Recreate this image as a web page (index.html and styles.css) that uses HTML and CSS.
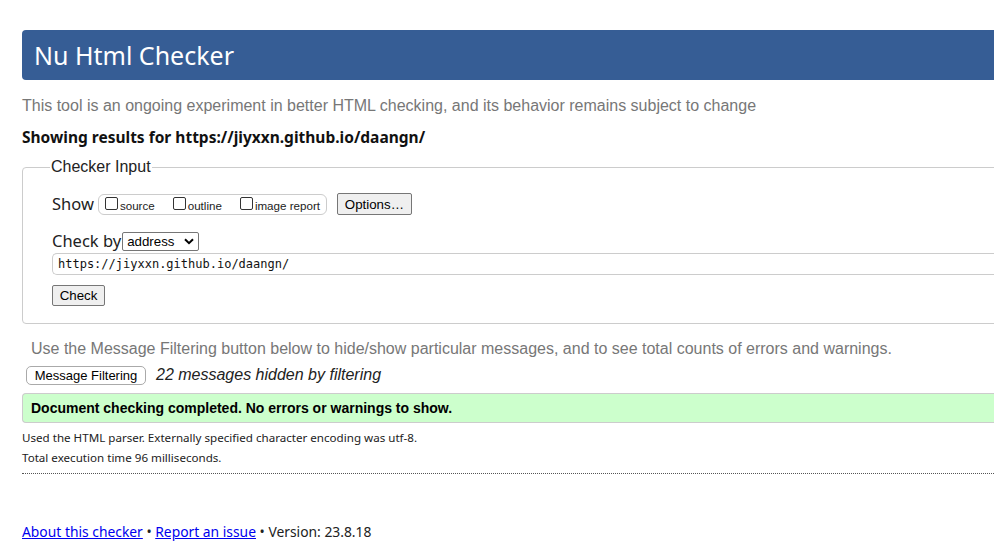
FILE: index.html
```html
<!DOCTYPE html>
<html lang="en">
<head>
<meta charset="utf-8">
<title>Nu Html Checker</title>
<link rel="stylesheet" href="styles.css">
</head>
<body>
<div class="page">
  <h1 class="title">Nu Html Checker</h1>
  <p class="tagline">This tool is an ongoing experiment in better HTML checking, and its behavior remains subject to change</p>
  <p class="showing">Showing results for https://jiyxxn.github.io/daangn/</p>
  <form class="checker">
    <fieldset class="input-set">
      <legend class="legend">Checker Input</legend>
      <div class="row show-row">
        <span class="lbl">Show</span>
        <span class="opts">
          <label class="opt"><span class="cb"></span>source</label>
          <label class="opt"><span class="cb"></span>outline</label>
          <label class="opt"><span class="cb"></span>image report</label>
        </span>
        <span class="btn options-btn">Options…</span>
      </div>
      <div class="row by-row">
        <span class="lbl">Check by</span>
        <span class="select">address<svg class="chev" width="10" height="7" viewBox="0 0 10 7"><path d="M1 1.2 L5 5.2 L9 1.2" fill="none" stroke="#000" stroke-width="2"/></svg></span>
      </div>
      <div class="url">https://jiyxxn.github.io/daangn/</div>
      <span class="btn check-btn">Check</span>
    </fieldset>
  </form>
  <p class="filter-note">Use the Message Filtering button below to hide/show particular messages, and to see total counts of errors and warnings.</p>
  <div class="filter-row">
    <span class="btn mf-btn">Message Filtering</span>
    <em class="hidden-count">22 messages hidden by filtering</em>
  </div>
  <p class="success">Document checking completed. No errors or warnings to show.</p>
  <p class="details">Used the HTML parser. Externally specified character encoding was utf-8.</p>
  <p class="details">Total execution time 96 milliseconds.</p>
  <div class="dotted"></div>
  <p class="footer"><a href="#">About this checker</a> • <a href="#">Report an issue</a> • Version: 23.8.18</p>
</div>
</body>
</html>
```

FILE: styles.css
```css
html, body {
  margin: 0;
  padding: 0;
  background: #fff;
  overflow: hidden;
}
body {
  width: 994px;
  height: 559px;
}
.page {
  width: 1100px;
  padding: 30px 0 0 22px;
  font-family: "Noto Sans", "Noto Sans CJK KR", sans-serif;
  color: #222;
}
.title {
  margin: 0;
  height: 50px;
  background: #365d95;
  color: #fff;
  border-radius: 4px 0 0 4px;
  font-weight: normal;
  font-size: 25px;
  line-height: 50px;
  padding-left: 12px;
  letter-spacing: 0;
}
.tagline {
  margin: 16px 0 0;
  font-family: "Liberation Sans", Arial, sans-serif;
  font-size: 16px;
  line-height: 20px;
  color: #777;
}
.showing {
  margin: 10px 0 0;
  font-size: 15.5px;
  font-weight: bold;
  line-height: 22px;
  color: #111;
}
.checker {
  margin: 10px 0 0;
}
.input-set {
  margin: 0;
  border: 1px solid #ccc;
  border-radius: 4px 0 0 4px;
  padding: 14px 29px 17px;
}
.legend {
  padding: 0 1px;
  margin-left: -2px;
  font-family: "Liberation Sans", Arial, sans-serif;
  font-size: 16px;
  line-height: 18px;
  color: #222;
}
.row {
  display: flex;
  align-items: center;
}
.lbl {
  font-size: 16.5px;
  color: #222;
  line-height: 22px;
}
.show-row {
  height: 24px;
  margin-top: 2px;
}
.opts {
  display: flex;
  align-items: center;
  margin-left: 4px;
  height: 21px;
  width: 229px;
  box-sizing: border-box;
  border: 1px solid #ccc;
  border-radius: 6px;
  padding: 0 0 0 6px;
}
.opt {
  display: flex;
  align-items: center;
  font-family: "Liberation Sans", Arial, sans-serif;
  font-size: 11.6px;
  color: #222;
  margin-right: 18px;
  padding-top: 3px;
}
.opt:last-child { margin-right: 0; }
.cb {
  display: inline-block;
  width: 11px;
  height: 11px;
  border: 1px solid #333;
  border-radius: 2px;
  margin-right: 2px;
  margin-top: -5px;
}
.btn {
  display: inline-flex;
  align-items: center;
  justify-content: center;
  box-sizing: border-box;
  background: #efefef;
  border: 1px solid #767676;
  border-radius: 2px;
  font-family: "Liberation Sans", Arial, sans-serif;
  font-size: 13.3px;
  color: #000;
}
.options-btn {
  margin-left: 10px;
  width: 75px;
  height: 22px;
}
.by-row {
  margin-top: 14px;
  height: 22px;
}
.select {
  display: inline-flex;
  align-items: center;
  justify-content: space-between;
  box-sizing: border-box;
  margin-left: 1px;
  width: 77px;
  height: 19px;
  border: 1px solid #767676;
  border-radius: 2px;
  padding: 0 4px 0 4px;
  font-family: "Liberation Sans", Arial, sans-serif;
  font-size: 13.3px;
  color: #000;
}
.url {
  margin-top: 1px;
  height: 22px;
  box-sizing: border-box;
  border: 1px solid #ccc;
  border-radius: 5px 0 0 5px;
  border-right: none;
  padding-left: 5px;
  font-family: "DejaVu Sans Mono", "Liberation Mono", monospace;
  font-size: 12px;
  line-height: 20px;
  color: #111;
}
.check-btn {
  margin-top: 10px;
  width: 53px;
  height: 21px;
}
.filter-note {
  margin: 16px 0 0 9px;
  font-family: "Liberation Sans", Arial, sans-serif;
  font-size: 16px;
  line-height: 18px;
  color: #777;
}
.filter-row {
  display: flex;
  align-items: center;
  margin: 7px 0 0 4px;
  height: 20px;
}
.mf-btn {
  width: 120px;
  height: 19px;
  border: 1px solid #aaa;
  border-radius: 5px;
  background: #fff;
  font-size: 13px;
}
.hidden-count {
  margin-left: 10px;
  font-family: "Liberation Sans", Arial, sans-serif;
  font-size: 16px;
  color: #222;
}
.success {
  margin: 8px 0 0;
  height: 30px;
  box-sizing: border-box;
  background: #ccffcc;
  border: 1px solid #ccc;
  border-right: none;
  border-radius: 4px 0 0 4px;
  padding-left: 8px;
  font-family: "Liberation Sans", Arial, sans-serif;
  font-weight: bold;
  font-size: 14px;
  line-height: 28px;
  color: #000;
}
.details {
  margin: 0;
  height: 20px;
  font-size: 11.6px;
  line-height: 20px;
  color: #222;
}
.success + .details {
  margin-top: 5px;
}
.dotted {
  margin-top: 5px;
  border-top: 1px dotted #555;
}
.footer {
  margin: 48px 0 0;
  font-size: 13.85px;
  line-height: 20px;
  color: #222;
}
.footer a {
  color: #0000ee;
}
```
